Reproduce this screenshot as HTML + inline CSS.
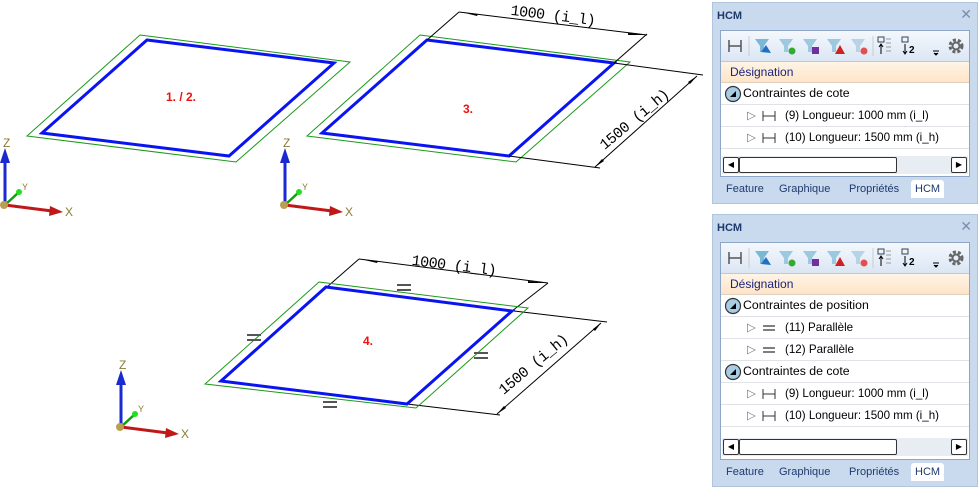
<!DOCTYPE html>
<html><head><meta charset="utf-8"><style>
body{margin:0;width:979px;height:488px;background:#fff;position:relative;overflow:hidden;font-family:"Liberation Sans",sans-serif}
.p{position:absolute;left:712px;width:266px;background:#c9d9ee;border:1px solid #b0c4de;box-sizing:border-box}
.ttl{position:absolute;left:4px;top:7px;font-size:11px;font-weight:bold;color:#1e3a6e}
.x{position:absolute;right:5px;top:3px;font-size:14px;color:#7a8fae}
.in{position:absolute;left:7px;right:7px;background:#fff;border:1px solid #8ea6c6}
.tb{position:absolute;left:0;right:0;top:0;height:30px;background:linear-gradient(#f4f8fd,#dbe6f4);border-bottom:1px solid #b8c9e0}
.hd{position:absolute;left:0;right:0;height:21px;background:linear-gradient(#fff4e6,#fde4c8);border-bottom:1px solid #e0d0c0;font-size:12px;color:#1a237e;line-height:21px;padding-left:9px;box-sizing:border-box}
.r{position:absolute;left:0;right:0;height:21px;border-bottom:1px solid #dfe3e8;font-size:11.6px;line-height:21px;color:#000}
.g{font-size:12.3px}
.sb{position:absolute;left:1px;right:1px;height:18px;background:#e8edf4}
.tabs{position:absolute;left:7px;font-size:11px;color:#1e3a6e}
.tabs span{position:absolute;top:0;white-space:nowrap}
.dm{font-family:"Liberation Mono",monospace;font-size:15px;letter-spacing:-0.5px;fill:#000}
.sn{font-family:"Liberation Sans",sans-serif}
</style></head><body>
<svg width="710" height="488" style="position:absolute;left:0;top:0">
<g fill="none">
<polygon points="140,35 350,62 236,162 27,136" stroke="#1a9a1a" stroke-width="1"/>
<polygon points="147,40 334,63 229,156 42,133" stroke="#0a14f0" stroke-width="3"/>
<polygon points="420,35 630,62 516,162 307,136" stroke="#1a9a1a" stroke-width="1"/>
<polygon points="427,40 614,63 509,156 322,133" stroke="#0a14f0" stroke-width="3"/>
<g stroke="#000" stroke-width="1">
<line x1="427" y1="40" x2="459" y2="12"/><line x1="459" y1="12" x2="647" y2="35"/><line x1="614" y1="63" x2="647" y2="34"/>
<line x1="614" y1="63" x2="703" y2="75"/><line x1="509" y1="156" x2="600" y2="168"/><line x1="697" y1="76" x2="595" y2="167"/>
<line x1="327" y1="287" x2="359" y2="259"/><line x1="359" y1="259" x2="548" y2="283"/><line x1="512" y1="311" x2="548" y2="283"/>
<line x1="514" y1="311" x2="607" y2="322"/><line x1="407" y1="404" x2="500" y2="415"/><line x1="601" y1="323" x2="497" y2="414"/>
</g>
<polygon points="319,282 528,308 416,408 205,384" stroke="#1a9a1a" stroke-width="1"/>
<polygon points="326,287 512,311 407,404 221,381" stroke="#0a14f0" stroke-width="3"/>
</g>
<g fill="#000">
<polygon points="461,12 478,14 477,16"/><polygon points="645,35 628,33 628,35"/>
<polygon points="697,76 688,82 690,84"/><polygon points="595,167 602,159 604,161"/>
<polygon points="360,259 378,261 377,263"/><polygon points="546,283 528,281 528,283"/>
<polygon points="601,323 593,329 595,331"/><polygon points="497,414 504,406 506,408"/>
</g>
<text class="dm" x="553" y="20" text-anchor="middle" transform="rotate(7 553 15)">1000 (i_l)</text>
<text class="dm" x="634" y="124" text-anchor="middle" transform="rotate(-40 634 119)">1500 (i_h)</text>
<text class="dm" x="454" y="270" text-anchor="middle" transform="rotate(7 454 265)">1000 (i_l)</text>
<text class="dm" x="533" y="369" text-anchor="middle" transform="rotate(-40 533 364)">1500 (i_h)</text>
<g fill="#f01010" font-weight="bold" font-size="12" class="sn">
<text x="166" y="101">1. / 2.</text><text x="463" y="113">3.</text><text x="363" y="345">4.</text>
</g>
<g stroke="#555" stroke-width="2">
<path d="M397 285h14M397 290h14"/><path d="M247 335h14M247 340h14"/><path d="M474 353h14M474 358h14"/><path d="M323 402h14M323 407h14"/>
</g>
<g id="ax" class="sn">
<line x1="5" y1="205" x2="5" y2="160" stroke="#1a2ad0" stroke-width="3"/><polygon points="0,163 10,163 5,148" fill="#1a2ad0"/>
<line x1="5" y1="205" x2="52" y2="211" stroke="#c01818" stroke-width="3"/><polygon points="50,206 63,212 49,216" fill="#c01818"/>
<line x1="5" y1="205" x2="19" y2="192" stroke="#10a010" stroke-width="2.5"/><circle cx="19" cy="192" r="3" fill="#20e020"/>
<circle cx="4" cy="205" r="4" fill="#b8a050"/>
<text x="3" y="147" font-size="12" fill="#8a7a30">Z</text><text x="22" y="190" font-size="9" fill="#8a7a30">Y</text><text x="65" y="216" font-size="12" fill="#8a7a30">X</text>
</g>
<use href="#ax" x="280" y="0"/><use href="#ax" x="116" y="222"/>
</svg>

<div class="p" style="top:2px;height:202px">
<div class="ttl">HCM</div><div class="x">✕</div>
<div class="in" style="top:27px;height:145px">
<div class="tb"><svg width="250" height="30"><g id="tbi">
<path d="M8 9v12M20 9v12M8 15h12" stroke="#555" stroke-width="1.5" fill="none"/><line x1="28" y1="5" x2="28" y2="25" stroke="#ccc"/>
<path d="M34 8h14l-5 7v6h-4v-6z" fill="#7ab8d8"/><path d="M40 21l5-7 5 8z" fill="#2070c0"/>
<path d="M58 8h14l-5 7v6h-4v-6z" fill="#9cc8e0"/><circle cx="71" cy="20" r="3.5" fill="#3a3"/>
<path d="M82 8h14l-5 7v6h-4v-6z" fill="#9cc8e0"/><rect x="91" y="16" width="7" height="7" fill="#7030a0"/>
<path d="M106 8h14l-5 7v6h-4v-6z" fill="#9cc8e0"/><path d="M119 14l5 9h-10z" fill="#d02020"/>
<path d="M130 8h14l-5 7v6h-4v-6z" fill="#b8d4e4"/><circle cx="143" cy="20" r="3.5" fill="#e05050"/>
<line x1="152" y1="5" x2="152" y2="25" stroke="#ccc"/>
<rect x="157" y="6" width="6" height="5" fill="none" stroke="#345"/><path d="M160 13v10M158 16l2-3 2 3" stroke="#000" fill="none"/><path d="M165 8h5M165 12h5M165 16h5M165 20h5" stroke="#999"/>
<rect x="181" y="6" width="6" height="5" fill="none" stroke="#345"/><path d="M184 13v10M182 20l2 3 2-3" stroke="#000" fill="none"/><text x="188" y="22" font-size="10" font-weight="bold" font-family="Liberation Sans">2</text>
<path d="M212 20h6M213 22l2 2 2-2" stroke="#000"/>
<circle cx="235" cy="15" r="6" fill="none" stroke="#666" stroke-width="3" stroke-dasharray="3 2"/><circle cx="235" cy="15" r="3.5" fill="none" stroke="#666" stroke-width="2"/>
</g></svg></div>
<div class="hd" style="top:31px">Désignation</div>
<div class="r g" style="top:52px"><svg width="20" height="21" style="position:absolute;left:2px;top:0"><circle cx="10" cy="11" r="7.5" fill="#a8cce4" stroke="#333" stroke-width="1.2"/><path d="M7 14h6v-6z" fill="#000"/></svg><span style="position:absolute;left:22px">Contraintes de cote</span></div>
<div class="r" style="top:74px"><span style="position:absolute;left:26px;color:#777">▷</span><svg width="14" height="21" style="position:absolute;left:41px"><path d="M1 6v10M13 6v10M1 11h12" stroke="#333" fill="none"/></svg><span style="position:absolute;left:64px">(9) Longueur: 1000 mm (i_l)</span></div>
<div class="r" style="top:96px"><span style="position:absolute;left:26px;color:#777">▷</span><svg width="14" height="21" style="position:absolute;left:41px"><path d="M1 6v10M13 6v10M1 11h12" stroke="#333" fill="none"/></svg><span style="position:absolute;left:64px">(10) Longueur: 1500 mm (i_h)</span></div>
<div class="sb" style="top:125px"><div style="position:absolute;left:1px;top:1px;width:14px;height:14px;border:1px solid #333;border-radius:2px;background:#fff;font-size:8px;text-align:center;line-height:14px">◀</div><div style="position:absolute;left:17px;top:1px;width:156px;height:14px;border:1px solid #333;border-radius:2px;background:#fff"></div><div style="position:absolute;right:1px;top:1px;width:14px;height:14px;border:1px solid #333;border-radius:2px;background:#fff;font-size:8px;text-align:center;line-height:14px">▶</div></div>
</div>
<div class="tabs" style="top:180px"><span style="left:6px">Feature</span><span style="left:59px">Graphique</span><span style="left:129px">Propriétés</span><span style="left:191px;top:-3px;background:#fff;padding:3px 4px 3px 4px;border-radius:3px 3px 0 0">HCM</span></div>
</div>

<div class="p" style="top:214px;height:273px">
<div class="ttl">HCM</div><div class="x">✕</div>
<div class="in" style="top:27px;height:216px">
<div class="tb"><svg width="250" height="30"><use href="#tbi"/></svg></div>
<div class="hd" style="top:31px">Désignation</div>
<div class="r g" style="top:52px"><svg width="20" height="21" style="position:absolute;left:2px;top:0"><circle cx="10" cy="11" r="7.5" fill="#a8cce4" stroke="#333" stroke-width="1.2"/><path d="M7 14h6v-6z" fill="#000"/></svg><span style="position:absolute;left:22px">Contraintes de position</span></div>
<div class="r" style="top:74px"><span style="position:absolute;left:26px;color:#777">▷</span><svg width="14" height="21" style="position:absolute;left:41px"><path d="M1 9h12M1 13h12" stroke="#555" stroke-width="1.5"/></svg><span style="position:absolute;left:64px">(11) Parallèle</span></div>
<div class="r" style="top:96px"><span style="position:absolute;left:26px;color:#777">▷</span><svg width="14" height="21" style="position:absolute;left:41px"><path d="M1 9h12M1 13h12" stroke="#555" stroke-width="1.5"/></svg><span style="position:absolute;left:64px">(12) Parallèle</span></div>
<div class="r g" style="top:118px"><svg width="20" height="21" style="position:absolute;left:2px;top:0"><circle cx="10" cy="11" r="7.5" fill="#a8cce4" stroke="#333" stroke-width="1.2"/><path d="M7 14h6v-6z" fill="#000"/></svg><span style="position:absolute;left:22px">Contraintes de cote</span></div>
<div class="r" style="top:140px"><span style="position:absolute;left:26px;color:#777">▷</span><svg width="14" height="21" style="position:absolute;left:41px"><path d="M1 6v10M13 6v10M1 11h12" stroke="#333" fill="none"/></svg><span style="position:absolute;left:64px">(9) Longueur: 1000 mm (i_l)</span></div>
<div class="r" style="top:162px"><span style="position:absolute;left:26px;color:#777">▷</span><svg width="14" height="21" style="position:absolute;left:41px"><path d="M1 6v10M13 6v10M1 11h12" stroke="#333" fill="none"/></svg><span style="position:absolute;left:64px">(10) Longueur: 1500 mm (i_h)</span></div>
<div class="sb" style="top:195px"><div style="position:absolute;left:1px;top:1px;width:14px;height:14px;border:1px solid #333;border-radius:2px;background:#fff;font-size:8px;text-align:center;line-height:14px">◀</div><div style="position:absolute;left:17px;top:1px;width:156px;height:14px;border:1px solid #333;border-radius:2px;background:#fff"></div><div style="position:absolute;right:1px;top:1px;width:14px;height:14px;border:1px solid #333;border-radius:2px;background:#fff;font-size:8px;text-align:center;line-height:14px">▶</div></div>
</div>
<div class="tabs" style="top:251px"><span style="left:6px">Feature</span><span style="left:59px">Graphique</span><span style="left:129px">Propriétés</span><span style="left:191px;top:-3px;background:#fff;padding:3px 4px 3px 4px;border-radius:3px 3px 0 0">HCM</span></div>
</div>
</body></html>
